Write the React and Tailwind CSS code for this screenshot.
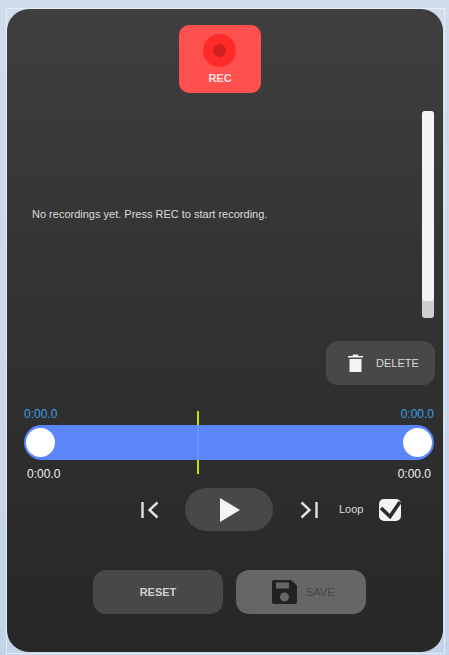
import React from 'react';

const App = () => {
  return (
    <div
      className="w-[449px] h-[655px] overflow-hidden bg-gradient-to-b from-[#d1ddec] to-[#c3d3e9] pl-[6px] pt-[8px] font-['Liberation_Sans',Arial,sans-serif]"
    >
      <div className="w-[439px] h-[646px] border border-[#e6ecf5]">
        <div className="w-[436px] h-[643px] rounded-[22px] bg-gradient-to-b from-[#3f3f3f] via-[#343434] via-40% to-[#272727] flex flex-col">
          {/* rec button */}
          <div className="mt-[16px] ml-[172px] w-[82px] h-[68px] rounded-[10px] bg-[#ff5050] flex flex-col items-center">
            <div className="mt-[9px] mr-[2px] w-[33px] h-[33px] rounded-full bg-[#ff2b2b] flex items-center justify-center">
              <div className="w-[13px] h-[13px] rounded-full bg-[#cf1f1f]"></div>
            </div>
            <span className="mt-[5px] text-[11px] leading-[13px] font-bold text-[#ffe0e0]">REC</span>
          </div>

          {/* recordings list */}
          <div className="mt-[18px] h-[207px] flex items-center relative">
            <p className="ml-[25px] text-[11px] leading-[14px] mt-[-1px] text-[#dcdcdc]">
              No recordings yet. Press REC to start recording.
            </p>
            <div className="absolute left-[415px] top-0 w-[12px] h-[207px] rounded-[3px] bg-[#cfcfcf] overflow-hidden">
              <div className="h-[190px] rounded-[3px] bg-[#f4f4f4]"></div>
            </div>
          </div>

          <button className="mt-[23px] ml-[319px] w-[109px] h-[44px] rounded-[12px] bg-[#484848] flex items-center">
            <svg width="15" height="18" viewBox="0 0 15 18" className="ml-[22px]">
              <path d="M5 0.5h5l.5 1.5h4.5v1.5H0V2h4.5z" fill="#f4f4f4" />
              <path d="M1.5 5h12v13h-12z" fill="#f4f4f4" />
            </svg>
            <span className="ml-[13px] text-[11px] font-normal text-[#dadada]">DELETE</span>
          </button>

          {/* trim slider */}
          <div className="mt-[22px] ml-[17px] w-[410px] flex justify-between text-[12px] leading-[14px] text-[#39a0e4]">
            <span>0:00.0</span>
            <span>0:00.0</span>
          </div>
          <div className="mt-[4px] ml-[17px] w-[410px] h-[35px] rounded-full bg-[#5b85fb] flex items-center justify-between px-[2px] relative">
            <div className="w-[29px] h-[29px] rounded-full bg-white"></div>
            <div className="w-[29px] h-[29px] rounded-full bg-white"></div>
            <div className="absolute left-[173px] top-[-14px] w-[2px] h-[63px] bg-[#c8e000]"></div>
            <div className="absolute left-[173px] top-0 w-[2px] h-[35px] bg-[#6f92f5]"></div>
          </div>
          <div className="mt-[7px] ml-[20px] w-[404px] flex justify-between text-[12px] leading-[14px] text-[#f0f0f0]">
            <span>0:00.0</span>
            <span>0:00.0</span>
          </div>

          {/* transport */}
          <div className="mt-[7px] h-[43px] flex items-center">
            <svg width="18" height="18" viewBox="0 0 18 18" className="ml-[134px]" fill="none" stroke="#e2e2e2" strokeWidth="2.4">
              <path d="M1.5 1v16" />
              <path d="M16.5 1.5L8.5 9l8 7.5" />
            </svg>
            <div className="ml-[26px] w-[88px] h-[43px] rounded-full bg-[#484848] flex items-center justify-center">
              <svg width="20" height="24" viewBox="0 0 20 24" className="ml-[2px]">
                <path d="M0 0l20 12L0 24z" fill="#f4f4f4" />
              </svg>
            </div>
            <svg width="18" height="18" viewBox="0 0 18 18" className="ml-[27px]" fill="none" stroke="#e2e2e2" strokeWidth="2.4">
              <path d="M1.5 1.5L9.5 9l-8 7.5" />
              <path d="M16.5 1v16" />
            </svg>
            <span className="ml-[21px] text-[11px] text-[#dcdcdc]">Loop</span>
            <div className="ml-[16px] relative w-[22px] h-[22px] rounded-[5px] bg-[#f2f2f2]">
              <svg width="22" height="18" viewBox="0 0 22 18" className="absolute left-0 top-[2px]" fill="none" stroke="#2a2a2a" strokeWidth="3.6">
                <path d="M2 7l9 8.5L21 1" />
              </svg>
            </div>
          </div>

          {/* bottom buttons */}
          <div className="mt-[39px] ml-[86px] flex gap-[13px]">
            <button className="w-[130px] h-[44px] rounded-[13px] bg-[#484848] text-[11px] font-bold text-[#d0d0d0]">
              RESET
            </button>
            <button className="w-[130px] h-[44px] rounded-[13px] bg-[#666666] flex items-center">
              <svg width="25" height="24" viewBox="0 0 25 24" className="ml-[36px]">
                <path
                  fillRule="evenodd"
                  d="M2 0h17l6 5.5V22a2 2 0 0 1-2 2H2a2 2 0 0 1-2-2V2a2 2 0 0 1 2-2zM4 2.5v6h13v-6zM12.5 12.5a4.5 4.5 0 1 0 0 9 4.5 4.5 0 0 0 0-9z"
                  fill="#222222"
                />
              </svg>
              <span className="ml-[9px] text-[11px] text-[#474747]">SAVE</span>
            </button>
          </div>
        </div>
      </div>
    </div>
  );
};

export default App;
